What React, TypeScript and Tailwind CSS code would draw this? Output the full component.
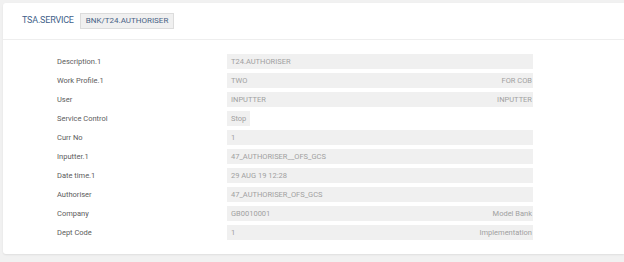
const ROWS: { label: string; value: string; extra?: string; short?: boolean }[] = [
  { label: "Description.1", value: "T24.AUTHORISER" },
  { label: "Work Profile.1", value: "TWO", extra: "FOR COB" },
  { label: "User", value: "INPUTTER", extra: "INPUTTER" },
  { label: "Service Control", value: "Stop", short: true },
  { label: "Curr No", value: "1" },
  { label: "Inputter.1", value: "47_AUTHORISER__OFS_GCS" },
  { label: "Date time.1", value: "29 AUG 19 12:28" },
  { label: "Authoriser", value: "47_AUTHORISER_OFS_GCS" },
  { label: "Company", value: "GB0010001", extra: "Model Bank" },
  { label: "Dept Code", value: "1", extra: "Implementation" },
];

export default function App() {
  return (
    <div
      className="w-[624px] h-[262px] bg-[#f1f1f1] pl-[3px] pt-[3px] overflow-hidden"
      style={{ fontFamily: "Roboto, 'Liberation Sans', sans-serif" }}
    >
      <div className="bg-white rounded-l-[3px] shadow-[0_1px_2px_rgba(0,0,0,0.08)]">
        {/* header */}
        <div className="h-[37px] flex items-center gap-[6px] pl-[19px] border-b border-[#eeeeee]">
          <span className="text-[9px] text-[#3f5f8a] tracking-[-0.2px]">TSA.SERVICE</span>
          <span className="h-[16px] px-[5px] flex items-center bg-[#f0f0f0] border border-[#dcdcdc] text-[8px] text-[#4a6386]">
            BNK/T24.AUTHORISER
          </span>
        </div>

        {/* fields */}
        <div className="flex flex-col gap-[4px] pt-[14px] pb-[14px]">
          {ROWS.map((r) => (
            <div key={r.label} className="flex items-center h-[15px]">
              <div className="w-[224px] pl-[54px] text-[7.5px] text-[#5c5c5c]">{r.label}</div>
              <div
                className={
                  r.short
                    ? "h-[15px] w-[23px] bg-[#f0f0f0] flex items-center pl-[4px] text-[7.5px] text-[#a0a0a0]"
                    : "h-[15px] w-[306px] bg-[#f0f0f0] flex items-center justify-between pl-[4px] pr-[1px] text-[7.5px] text-[#a0a0a0]"
                }
              >
                <span>{r.value}</span>
                {r.extra && <span>{r.extra}</span>}
              </div>
            </div>
          ))}
        </div>
      </div>
    </div>
  );
}
